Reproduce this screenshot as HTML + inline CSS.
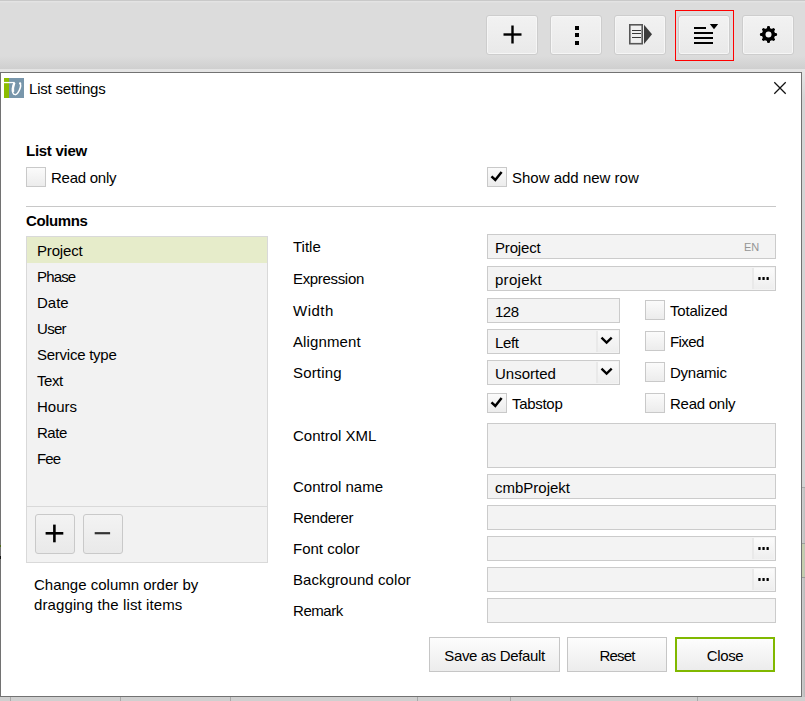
<!DOCTYPE html>
<html><head><meta charset="utf-8">
<style>
*{box-sizing:border-box;margin:0;padding:0}
html,body{width:805px;height:701px;overflow:hidden}
body{position:relative;background:#dcdcdc;font-family:"Liberation Sans",sans-serif;color:#000}
.a{position:absolute}
.t{position:absolute;font-size:15px;line-height:20px;white-space:nowrap}
.b{font-weight:bold}
.tb{position:absolute;top:15px;width:52px;height:40px;border:1px solid #cdcdcd;border-radius:3px;background:linear-gradient(#f2f2f2,#e9e9e9);box-shadow:inset 0 0 0 1px #f6f6f6}
.dlg{position:absolute;left:0;top:72px;width:802px;height:625px;border:1px solid #727272;background:#fff}
.cb{position:absolute;width:20px;height:20px;border:1px solid #c9c9c9;background:linear-gradient(#fbfbfb,#ececec)}
.in{position:absolute;left:487px;width:289px;height:25px;border:1px solid #cbcbcb;background:#f3f3f3}
.btn{position:absolute;top:637px;height:35px;border:1px solid #c6c6c6;background:linear-gradient(#fdfdfd,#ececec)}
.ck{position:absolute;width:20px;height:20px}
</style></head><body>

<div class="a" style="left:0;top:0;width:805px;height:1px;background:#c9c9c9"></div><div class="a" style="left:0;top:1px;width:805px;height:1px;background:#e3e3e3"></div><div class="a" style="left:0;top:2px;width:805px;height:1px;background:#dfdfdf"></div>
<div class="a" style="left:0;top:56px;width:805px;height:13px;background:linear-gradient(#dcdcdc,#cfcfcf)"></div>
<div class="a" style="left:0;top:69px;width:805px;height:3px;background:#e4e4e4"></div>
<div class="a" style="left:802px;top:69px;width:3px;height:418px;background:linear-gradient(#e6e6e6 0px,#d4d4d4 30px)"></div>
<div class="a" style="left:802px;top:487px;width:3px;height:1px;background:#a8a8a8"></div>
<div class="a" style="left:802px;top:488px;width:3px;height:55px;background:linear-gradient(90deg,#d0d0d0,#bdbdbd)"></div>
<div class="a" style="left:802px;top:543px;width:3px;height:1px;background:#a0a0a0"></div>
<div class="a" style="left:802px;top:544px;width:3px;height:33px;background:linear-gradient(90deg,#c5ceae,#c5ceae 66%,#bcbcbc)"></div>
<div class="a" style="left:802px;top:577px;width:3px;height:1px;background:#9a9a9a"></div>
<div class="a" style="left:802px;top:578px;width:3px;height:123px;background:linear-gradient(90deg,#cfcfcf,#b9b9b9)"></div>
<div class="a" style="left:0;top:697px;width:805px;height:4px;background:#d0d0d0"></div>
<div class="a" style="left:10px;top:697px;width:1px;height:4px;background:#a9a9a9"></div>
<div class="a" style="left:120px;top:697px;width:1px;height:4px;background:#a9a9a9"></div>
<div class="a" style="left:230px;top:697px;width:1px;height:4px;background:#a9a9a9"></div>
<div class="a" style="left:417px;top:697px;width:1px;height:4px;background:#a9a9a9"></div>
<div class="a" style="left:510px;top:697px;width:1px;height:4px;background:#a9a9a9"></div>
<div class="a" style="left:697px;top:697px;width:1px;height:4px;background:#a9a9a9"></div>
<div class="tb" style="left:486px"></div>
<div class="tb" style="left:550px"></div>
<div class="tb" style="left:614px"></div>
<div class="tb" style="left:678px"></div>
<div class="tb" style="left:742px"></div>
<svg class="a" style="left:0;top:0" width="805" height="72" viewBox="0 0 805 72">
 <g fill="#000">
  <rect x="503.5" y="33.3" width="18" height="2.4"/>
  <rect x="511.3" y="25.5" width="2.4" height="18"/>
  <rect x="575" y="26" width="4" height="4"/>
  <rect x="575" y="33" width="4" height="4"/>
  <rect x="575" y="41" width="4" height="4"/>
 </g>
 <rect x="629.8" y="24.8" width="12.4" height="18.9" fill="#f0f0f0" stroke="#575757" stroke-width="1.6"/>
 <g fill="#3a3a3a"><rect x="632" y="30" width="9" height="1"/><rect x="632" y="33" width="9" height="1"/><rect x="632" y="37" width="9" height="1"/></g>
 <path d="M644 24.8 L652 34.3 L644 44 Z" fill="#3c3c3c"/>
 <g fill="#000">
  <rect x="694" y="27" width="12" height="2"/>
  <rect x="694" y="32" width="19" height="2"/>
  <rect x="694" y="37" width="19" height="2"/>
  <rect x="694" y="42" width="19" height="2"/>
  <path d="M709.8 24 L718.2 24 L714 29.2 Z"/>
 </g>
 <g transform="translate(768.5 34.5)" fill="#000">
  <circle r="6.6"/>
  <rect x="-1.5" y="-8.6" width="3" height="17.2" rx="1.3"/>
  <rect x="-1.5" y="-8.4" width="3" height="16.8" rx="1.3" transform="rotate(45)"/>
  <rect x="-1.5" y="-8.6" width="3" height="17.2" rx="1.3" transform="rotate(90)"/>
  <rect x="-1.5" y="-8.4" width="3" height="16.8" rx="1.3" transform="rotate(135)"/>
  <circle r="3" fill="#f3f3f3"/>
 </g>
</svg>
<div class="a" style="left:675px;top:10px;width:59px;height:51px;border:1px solid #f00"></div>
<div class="dlg"></div>
<div class="a" style="left:0;top:545px;width:1px;height:2px;background:#4f6a16"></div><div class="a" style="left:0;top:556px;width:1px;height:3px;background:#151515"></div>
<svg class="a" style="left:4px;top:78px" width="20" height="20" viewBox="0 0 20 20">
 <rect x="0" y="0" width="5" height="20" fill="#8cbd00"/>
 <rect x="5" y="0" width="15" height="20" fill="#7896ab"/>
 <rect x="0" y="3.9" width="10.5" height="1.3" fill="#fff"/>
 <path d="M10.3 4.5 C8.6 8 8 12 8.8 14.6 C9.6 17.2 12.2 17.4 14 14.6 C15.8 11.8 17.2 8.5 16.4 5.6" stroke="#fff" stroke-width="1.5" fill="none"/>
 <path d="M10.4 4.6 C9.2 8 8.7 11.5 9.1 14" stroke="#fff" stroke-width="2.2" fill="none"/>
 <circle cx="16.1" cy="5.4" r="1.15" fill="#fff"/>
</svg>
<svg class="a" style="left:770px;top:78px" width="20" height="20" viewBox="0 0 20 20">
 <path d="M4.3 4.3 L15.7 15.7 M15.7 4.3 L4.3 15.7" stroke="#111" stroke-width="1.25"/>
</svg>
<div class="cb" style="left:26px;top:167px"></div>
<div class="cb" style="left:487px;top:167px"></div>
<svg class="ck" style="left:487px;top:167px" viewBox="0 0 20 20"><path d="M4.5 9.3 L8.3 13 L14.6 4.9" stroke="#000" stroke-width="2.5" fill="none"/></svg>
<div class="a" style="left:26px;top:206px;width:750px;height:1px;background:#c8c8c8"></div>
<div class="a" style="left:26px;top:236px;width:242px;height:327px;border:1px solid #d9d9d9;background:#f2f2f2"></div>
<div class="a" style="left:27px;top:237px;width:240px;height:26px;background:#e6ecca"></div>
<div class="a" style="left:27px;top:506px;width:240px;height:1px;background:#d9d9d9"></div>
<div class="a" style="left:35px;top:514px;width:40px;height:40px;border:1px solid #c9c9c9;border-radius:3px;background:linear-gradient(#f3f3f3,#e9e9e9)"></div>
<div class="a" style="left:83px;top:514px;width:40px;height:40px;border:1px solid #c9c9c9;border-radius:3px;background:linear-gradient(#f3f3f3,#e9e9e9)"></div>
<svg class="a" style="left:35px;top:514px" width="88" height="40" viewBox="0 0 88 40"><g fill="#000"><rect x="10.6" y="18" width="17.7" height="2.6"/><rect x="18.1" y="10.6" width="2.6" height="17.7"/></g><rect x="59.7" y="18.1" width="15.4" height="2.2" fill="#333"/></svg>
<div class="in" style="top:234px;width:289px;height:25px"></div>
<div class="a" style="left:744px;top:240px;font-size:11px;line-height:14px;color:#959595;letter-spacing:-0.1px">EN</div>
<div class="in" style="top:266px;width:289px;height:25px"></div>
<div class="a" style="left:752px;top:268px;width:22px;height:21px;border-left:2px solid #e9e9e9;background:linear-gradient(#fbfbfb,#eeeeee)"></div><svg class="a" style="left:752px;top:266px" width="23" height="25" viewBox="0 0 23 25"><g fill="#000"><rect x="6.3" y="10.9" width="2.3" height="3.1" rx=".6"/><rect x="10.4" y="10.9" width="2.3" height="3.1" rx=".6"/><rect x="14.5" y="10.9" width="2.3" height="3.1" rx=".6"/></g></svg>
<div class="in" style="top:298px;width:133px;height:25px"></div>
<div class="in" style="top:329px;width:133px;height:25px"></div>
<div class="a" style="left:596px;top:331px;width:22px;height:21px;border-left:2px solid #e9e9e9;background:linear-gradient(#fafafa,#eeeeee)"></div><svg class="a" style="left:596px;top:329px" width="23" height="25" viewBox="0 0 23 25"><path d="M5.5 8.6 L10.6 13.5 L15.7 8.6" stroke="#000" stroke-width="2.35" fill="none"/></svg>
<div class="in" style="top:360px;width:133px;height:25px"></div>
<div class="a" style="left:596px;top:362px;width:22px;height:21px;border-left:2px solid #e9e9e9;background:linear-gradient(#fafafa,#eeeeee)"></div><svg class="a" style="left:596px;top:360px" width="23" height="25" viewBox="0 0 23 25"><path d="M5.5 8.6 L10.6 13.5 L15.7 8.6" stroke="#000" stroke-width="2.35" fill="none"/></svg>
<div class="cb" style="left:487px;top:393px"></div>
<svg class="ck" style="left:487px;top:393px" viewBox="0 0 20 20"><path d="M4.5 9.3 L8.3 13 L14.6 4.9" stroke="#000" stroke-width="2.5" fill="none"/></svg>
<div class="cb" style="left:645px;top:300px"></div>
<div class="cb" style="left:645px;top:331px"></div>
<div class="cb" style="left:645px;top:362px"></div>
<div class="cb" style="left:645px;top:393px"></div>
<div class="in" style="top:423px;width:289px;height:45px"></div>
<div class="in" style="top:474px;width:289px;height:25px"></div>
<div class="in" style="top:505px;width:289px;height:25px"></div>
<div class="in" style="top:536px;width:289px;height:25px"></div>
<div class="a" style="left:752px;top:538px;width:22px;height:21px;border-left:2px solid #e9e9e9;background:linear-gradient(#fbfbfb,#eeeeee)"></div><svg class="a" style="left:752px;top:536px" width="23" height="25" viewBox="0 0 23 25"><g fill="#000"><rect x="6.3" y="10.9" width="2.3" height="3.1" rx=".6"/><rect x="10.4" y="10.9" width="2.3" height="3.1" rx=".6"/><rect x="14.5" y="10.9" width="2.3" height="3.1" rx=".6"/></g></svg>
<div class="in" style="top:567px;width:289px;height:25px"></div>
<div class="a" style="left:752px;top:569px;width:22px;height:21px;border-left:2px solid #e9e9e9;background:linear-gradient(#fbfbfb,#eeeeee)"></div><svg class="a" style="left:752px;top:567px" width="23" height="25" viewBox="0 0 23 25"><g fill="#000"><rect x="6.3" y="10.9" width="2.3" height="3.1" rx=".6"/><rect x="10.4" y="10.9" width="2.3" height="3.1" rx=".6"/><rect x="14.5" y="10.9" width="2.3" height="3.1" rx=".6"/></g></svg>
<div class="in" style="top:598px;width:289px;height:25px"></div>
<div class="btn" style="left:429px;width:131px"></div>
<div class="btn" style="left:567px;width:100px"></div>
<div class="btn" style="left:675px;width:100px;border:2px solid #80b800"></div>
<div class="t" style="left:429px;top:646px;width:131px;text-align:center;letter-spacing:-0.36px">Save as Default</div>
<div class="t" style="left:567px;top:646px;width:100px;text-align:center;letter-spacing:-0.8px">Reset</div>
<div class="t" style="left:675px;top:646px;width:100px;text-align:center;letter-spacing:-0.35px">Close</div>
<div class="t" style="left:29px;top:79px;letter-spacing:-0.21px">List settings</div>
<div class="t" style="left:26px;top:141px;letter-spacing:-0.27px;font-weight:bold">List view</div>
<div class="t" style="left:51px;top:168px;letter-spacing:-0.25px">Read only</div>
<div class="t" style="left:512px;top:168px">Show add new row</div>
<div class="t" style="left:26px;top:211px;letter-spacing:-0.4px;font-weight:bold">Columns</div>
<div class="t" style="left:37px;top:241px;letter-spacing:-0.17px">Project</div>
<div class="t" style="left:37px;top:267px;letter-spacing:-0.85px">Phase</div>
<div class="t" style="left:37px;top:293px">Date</div>
<div class="t" style="left:37px;top:319px;letter-spacing:-0.7px">User</div>
<div class="t" style="left:37px;top:345px;letter-spacing:-0.25px">Service type</div>
<div class="t" style="left:37px;top:371px;letter-spacing:-0.43px">Text</div>
<div class="t" style="left:37px;top:397px">Hours</div>
<div class="t" style="left:37px;top:423px;letter-spacing:-0.47px">Rate</div>
<div class="t" style="left:37px;top:449px;letter-spacing:-0.85px">Fee</div>
<div class="t" style="left:34px;top:575px">Change column order by</div>
<div class="t" style="left:34px;top:595px;letter-spacing:0.11px">dragging the list items</div>
<div class="t" style="left:293px;top:237px">Title</div>
<div class="t" style="left:293px;top:269px;letter-spacing:-0.33px">Expression</div>
<div class="t" style="left:293px;top:301px;letter-spacing:0.5px">Width</div>
<div class="t" style="left:293px;top:332px;letter-spacing:0.12px">Alignment</div>
<div class="t" style="left:293px;top:363px;letter-spacing:0.17px">Sorting</div>
<div class="t" style="left:293px;top:426px">Control XML</div>
<div class="t" style="left:293px;top:477px">Control name</div>
<div class="t" style="left:293px;top:508px;letter-spacing:-0.28px">Renderer</div>
<div class="t" style="left:293px;top:539px">Font color</div>
<div class="t" style="left:293px;top:570px;letter-spacing:0.07px">Background color</div>
<div class="t" style="left:293px;top:601px;letter-spacing:-0.44px">Remark</div>
<div class="t" style="left:495px;top:238px;letter-spacing:-0.17px">Project</div>
<div class="t" style="left:495px;top:270px;letter-spacing:0.28px">projekt</div>
<div class="t" style="left:495px;top:302px;letter-spacing:-0.5px">128</div>
<div class="t" style="left:495px;top:333px;letter-spacing:-0.4px">Left</div>
<div class="t" style="left:495px;top:364px">Unsorted</div>
<div class="t" style="left:512px;top:394px;letter-spacing:-0.3px">Tabstop</div>
<div class="t" style="left:670px;top:301px;letter-spacing:-0.19px">Totalized</div>
<div class="t" style="left:670px;top:332px;letter-spacing:-0.6px">Fixed</div>
<div class="t" style="left:670px;top:363px;letter-spacing:-0.23px">Dynamic</div>
<div class="t" style="left:670px;top:394px;letter-spacing:-0.25px">Read only</div>
<div class="t" style="left:495px;top:478px">cmbProjekt</div>
</body></html>
